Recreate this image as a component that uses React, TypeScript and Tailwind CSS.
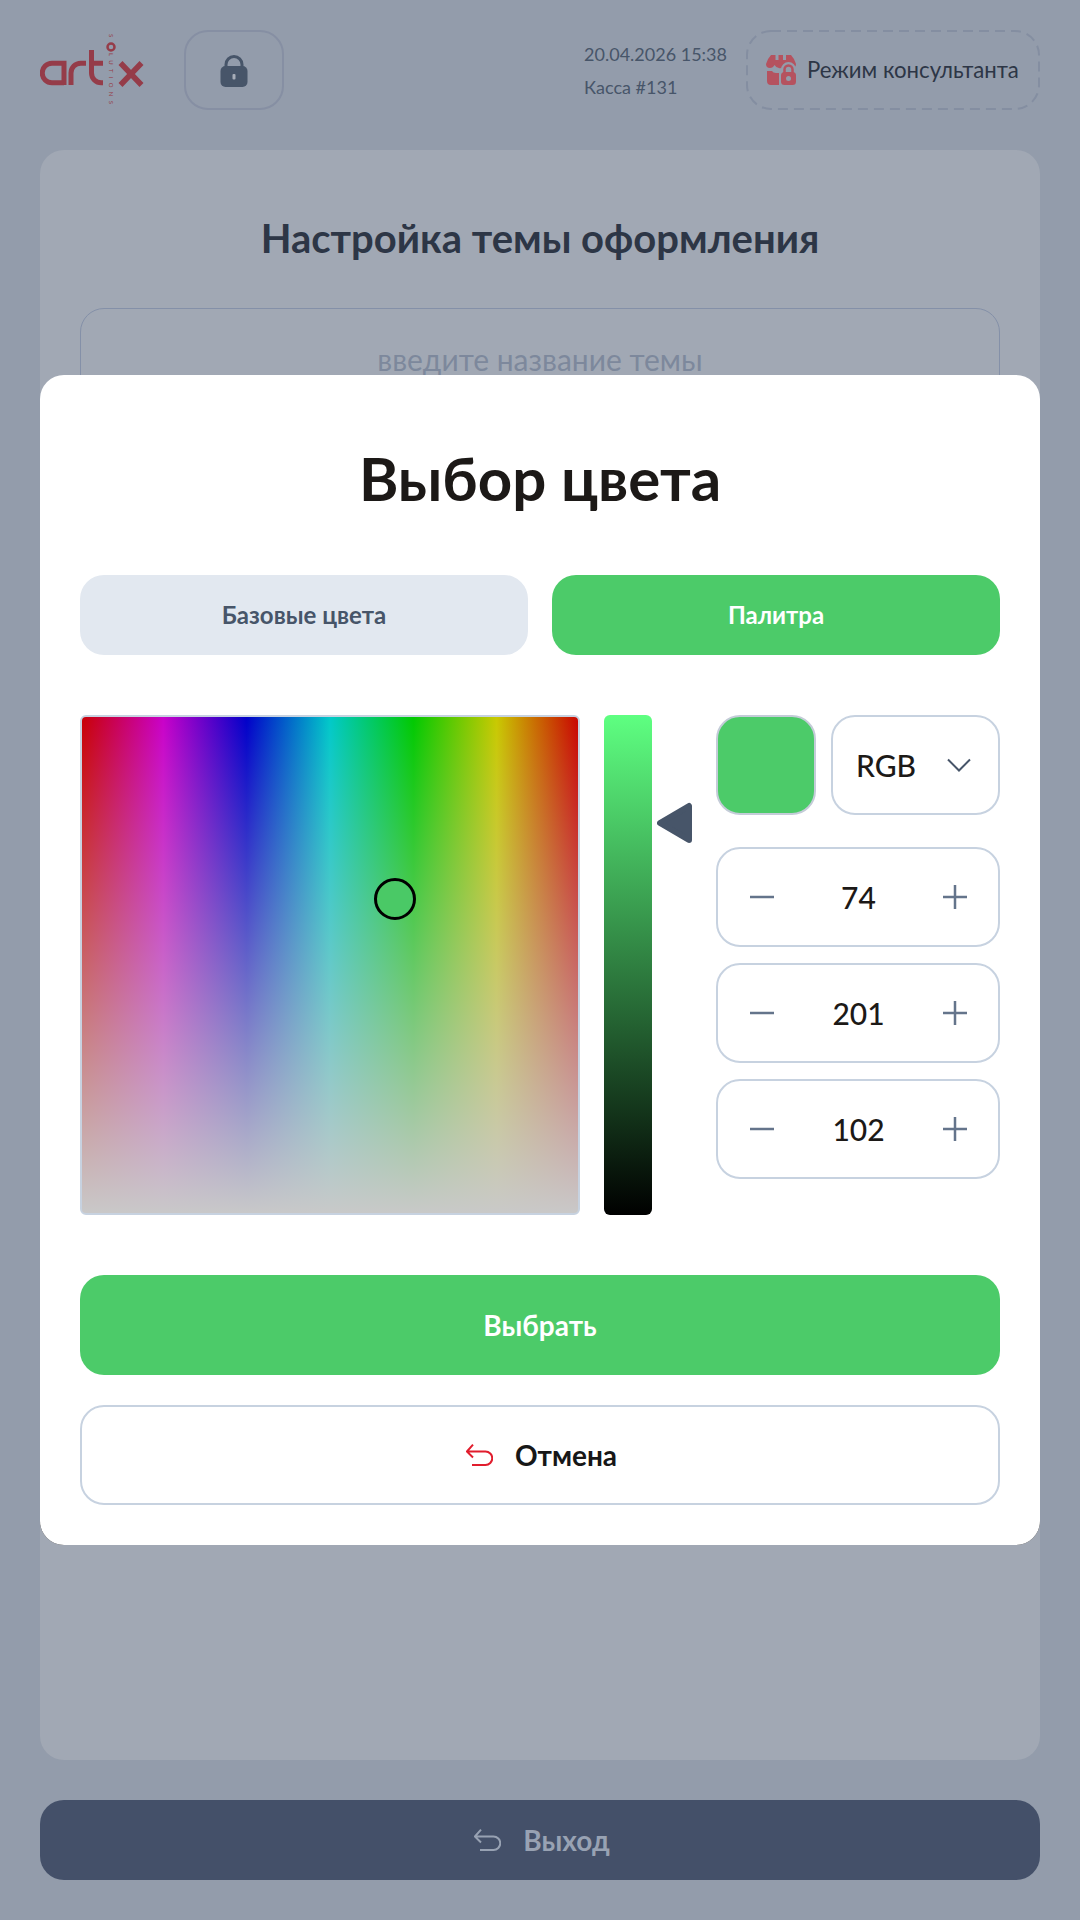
import { ReactNode } from 'react'

function Logo() {
  return (
    <svg width="106" height="74" viewBox="0 0 106 74" fill="none" className="shrink-0">
      <g stroke="#953c49" strokeWidth="5">
        <path d="M24 49.75H12a9.75 9.75 0 0 1 0-19.5H24V52" />
        <path d="M31 52V40a9.75 9.75 0 0 1 9.75-9.75H46" />
        <path d="M51.5 17V40a9.75 9.75 0 0 0 9.75 9.75H63M51.5 30.25H63" />
        <path d="M80.5 30l21 22M101.5 30l-21 22" strokeWidth="5.5" />
        <circle cx="71" cy="14" r="3.5" strokeWidth="2.5" />
      </g>
      <g transform="translate(69 0) rotate(90)" fill="#953c49" fontSize="6" fontFamily="Lato, sans-serif">
        <text x="1" y="0">S</text>
        <text x="20" y="0" letterSpacing="4.3">LUTIONS</text>
      </g>
    </svg>
  )
}

function LockIcon() {
  return (
    <svg width="28" height="33" viewBox="0 0 28 33" fill="none">
      <path d="M6 15V10.5a8 8 0 0 1 16 0V15" stroke="#475569" strokeWidth="3" />
      <rect x="0.5" y="12" width="27" height="21" rx="5" fill="#475569" />
      <rect x="12.5" y="20" width="3" height="5.5" rx="1" fill="#a7adb8" />
    </svg>
  )
}

function ShopLockIcon() {
  return (
    <svg width="30" height="30" viewBox="0 0 30 30" className="shrink-0">
      <path
        d="M5 0H9.5V5H12.5V0H17V5H20V0H25Q28 3 30 9Q30 13 26 13Q23 13 21.5 10Q19 14 15 13Q11 14 8.5 10Q7 13 4 13Q0 13 0 9Q2 3 5 0Z"
        fill="#b5525f"
      />
      <path d="M1 16H6Q7 18 10 18H13V30H5Q1 30 1 26Z" fill="#b5525f" />
      <path d="M18.5 19V14.5a4 4 0 0 1 8 0V19" fill="none" stroke="#939cab" strokeWidth="7" />
      <rect x="13.5" y="16" width="16" height="14" rx="3.5" fill="#939cab" />
      <path d="M18.5 18V14.5a4 4 0 0 1 8 0V18" fill="none" stroke="#b5525f" strokeWidth="2.5" />
      <rect x="15" y="17" width="15" height="13" rx="3.5" fill="#b5525f" />
      <circle cx="22.5" cy="23.5" r="2.5" fill="#939cab" />
    </svg>
  )
}

function BackIcon({ color }: { color: string }) {
  return (
    <svg width="27" height="22" viewBox="0 0 27 22" fill="none" stroke={color} strokeWidth="2">
      <path d="M7 .7.9 7.5 7 13.5M1 7.5h18.5a6.5 6.5 0 0 1 0 13.5H6" />
    </svg>
  )
}

function Stepper({ value }: { value: number }) {
  return (
    <div className="flex h-[100px] items-center justify-between rounded-3xl border-2 border-[#c7d2e0] pl-[32px] pr-[31px]">
      <svg width="24" height="24" viewBox="0 0 24 24" stroke="#64748b" strokeWidth="2.5">
        <path d="M0 12h24" />
      </svg>
      <span className="text-[30px] font-medium text-[#1c1917]">{value}</span>
      <svg width="24" height="24" viewBox="0 0 24 24" stroke="#64748b" strokeWidth="2.5">
        <path d="M0 12h24M12 0v24" />
      </svg>
    </div>
  )
}

function Tab({ active, children }: { active?: boolean; children: ReactNode }) {
  return (
    <div
      className={
        active
          ? 'flex h-20 flex-1 items-center justify-center rounded-3xl bg-[#4ccb69] text-2xl font-bold text-white'
          : 'flex h-20 flex-1 items-center justify-center rounded-3xl bg-[#e2e8f0] text-2xl font-bold text-[#475569]'
      }
    >
      {children}
    </div>
  )
}

export default function App() {
  return (
    <div className="relative flex h-[1920px] w-[1080px] flex-col overflow-hidden bg-[#939cab] px-10 font-['Lato',sans-serif]">
      {/* шапка */}
      <header className="flex h-[150px] items-center pb-[10px]">
        <Logo />
        <button className="ml-[38px] flex h-20 w-[100px] items-center justify-center rounded-3xl border-2 border-[#868fa3]">
          <LockIcon />
        </button>
        <div className="ml-auto flex flex-col gap-[11px] text-lg leading-[22px] text-[#475569]">
          <span>20.04.2026 15:38</span>
          <span>Касса #131</span>
        </div>
        <button className="relative ml-[19px] flex h-20 w-[294px] items-center gap-[11px] pl-5 text-[22.2px] text-[#2d3646]">
          <svg width="294" height="80" className="absolute left-0 top-0" fill="none">
            <rect x="1" y="1" width="292" height="78" rx="24" stroke="#848ea1" strokeWidth="2" strokeDasharray="10 6" />
          </svg>
          <ShopLockIcon />
          Режим консультанта
        </button>
      </header>

      {/* настройка темы, под модальным окном */}
      <main className="h-[1610px] rounded-3xl bg-[#a1a8b4] px-10 pt-[66px]">
        <h1 className="text-center text-[40px] font-bold leading-[44px] text-[#2d3646]">
          Настройка темы оформления
        </h1>
        <div className="mt-[48px] flex h-[104px] items-center justify-center rounded-3xl border-[1.5px] border-[#8490a8] pb-[2px] text-[30px] text-[#7d889c]">
          введите название темы
        </div>
      </main>

      <button className="mt-10 flex h-20 shrink-0 items-center justify-center gap-[22px] rounded-3xl bg-[#445069] pl-1 text-[28px] font-bold text-[#98a2b3]">
        <BackIcon color="#98a2b3" />
        Выход
      </button>

      {/* темная подложка видна только на скруглениях снизу */}
      <div className="absolute left-10 top-[1505px] h-10 w-[1000px] rounded-b-3xl bg-black" />

      {/* модальное окно выбора цвета */}
      <div className="absolute left-10 top-[375px] flex h-[1170px] w-[1000px] flex-col rounded-3xl bg-white p-10">
        <h2 className="h-[126px] text-center text-[60px] font-bold leading-[126px] text-[#1c1917]">
          Выбор цвета
        </h2>
        <div className="mt-[34px] flex gap-6">
          <Tab>Базовые цвета</Tab>
          <Tab active>Палитра</Tab>
        </div>

        <div className="mt-[60px] flex h-[500px]">
          <div className="relative h-[500px] w-[500px] shrink-0 rounded-md border-2 border-[#c7d2e0] bg-[linear-gradient(to_bottom,transparent,#c9c9c9),linear-gradient(to_right,#c90000,#c900c9,#0000c9,#00c9c9,#00c900,#c9c900,#c90000)] bg-origin-border">
            <div className="absolute left-[292px] top-[161px] h-[42px] w-[42px] rounded-full border-[3px] border-black bg-[#4ac966]" />
          </div>

          <div className="relative ml-6 h-[500px] w-12 shrink-0 rounded-md bg-[linear-gradient(to_bottom,#5eff81,#000000)]">
            <svg
              width="36"
              height="42"
              viewBox="0 0 36 42"
              className="absolute left-[53px] top-[87px]"
              fill="#475569"
              stroke="#475569"
              strokeWidth="6"
              strokeLinejoin="round"
            >
              <path d="M3 21 32 4v34z" />
            </svg>
          </div>

          <div className="ml-[64px] flex flex-1 flex-col">
            <div className="flex gap-[15px]">
              <div className="h-[100px] w-[100px] shrink-0 rounded-3xl border-2 border-[#c4ccd8] bg-[#4ccb69]" />
              <div className="flex h-[100px] flex-1 items-center justify-between rounded-3xl border-2 border-[#c7d2e0] pl-[23px] pr-[27px]">
                <span className="text-[30px] font-medium text-[#1c1917]">RGB</span>
                <svg width="24" height="14" viewBox="0 0 24 14" fill="none" stroke="#475569" strokeWidth="2">
                  <path d="M1 1.5 12 12.5 23 1.5" />
                </svg>
              </div>
            </div>
            <div className="mt-8 flex flex-col gap-4">
              <Stepper value={74} />
              <Stepper value={201} />
              <Stepper value={102} />
            </div>
          </div>
        </div>

        <button className="mt-[60px] h-[100px] shrink-0 rounded-3xl bg-[#4ccb69] text-[28px] font-bold text-white">
          Выбрать
        </button>
        <button className="mt-[30px] flex h-[100px] shrink-0 items-center justify-center gap-[22px] rounded-3xl border-2 border-[#c7d2e0] pl-[3px] text-[28px] font-bold text-[#171717]">
          <BackIcon color="#e11d2d" />
          Отмена
        </button>
      </div>
    </div>
  )
}
